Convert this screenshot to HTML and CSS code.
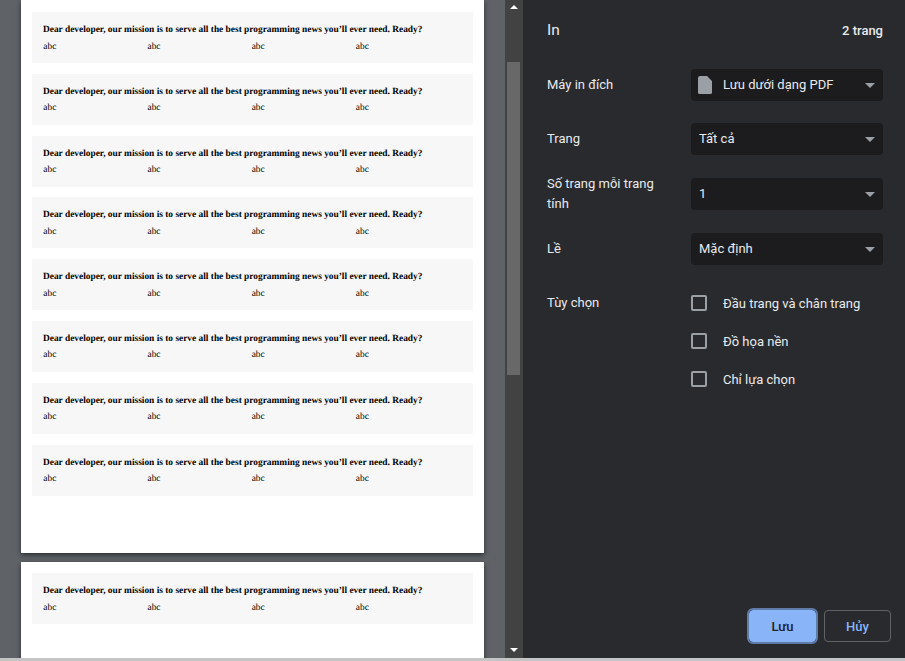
FILE: index.html
```html
<!DOCTYPE html>
<html lang="vi">
<head>
<meta charset="utf-8">
<title>In</title>
<link rel="stylesheet" href="styles.css">
</head>
<body>
<div class="app">
  <main class="preview">
    <section class="page page-first">
      <div class="card"><p class="headline">Dear developer, our mission is to serve all the best programming news you’ll ever need. Ready?</p><div class="cols"><span>abc</span><span>abc</span><span>abc</span><span>abc</span></div></div>
      <div class="card"><p class="headline">Dear developer, our mission is to serve all the best programming news you’ll ever need. Ready?</p><div class="cols"><span>abc</span><span>abc</span><span>abc</span><span>abc</span></div></div>
      <div class="card"><p class="headline">Dear developer, our mission is to serve all the best programming news you’ll ever need. Ready?</p><div class="cols"><span>abc</span><span>abc</span><span>abc</span><span>abc</span></div></div>
      <div class="card"><p class="headline">Dear developer, our mission is to serve all the best programming news you’ll ever need. Ready?</p><div class="cols"><span>abc</span><span>abc</span><span>abc</span><span>abc</span></div></div>
      <div class="card"><p class="headline">Dear developer, our mission is to serve all the best programming news you’ll ever need. Ready?</p><div class="cols"><span>abc</span><span>abc</span><span>abc</span><span>abc</span></div></div>
      <div class="card"><p class="headline">Dear developer, our mission is to serve all the best programming news you’ll ever need. Ready?</p><div class="cols"><span>abc</span><span>abc</span><span>abc</span><span>abc</span></div></div>
      <div class="card"><p class="headline">Dear developer, our mission is to serve all the best programming news you’ll ever need. Ready?</p><div class="cols"><span>abc</span><span>abc</span><span>abc</span><span>abc</span></div></div>
      <div class="card"><p class="headline">Dear developer, our mission is to serve all the best programming news you’ll ever need. Ready?</p><div class="cols"><span>abc</span><span>abc</span><span>abc</span><span>abc</span></div></div>
    </section>
    <section class="page page-second">
      <div class="card"><p class="headline">Dear developer, our mission is to serve all the best programming news you’ll ever need. Ready?</p><div class="cols"><span>abc</span><span>abc</span><span>abc</span><span>abc</span></div></div>
    </section>
  </main>
  <div class="scrollbar">
    <svg class="arrow" width="8" height="4" viewBox="0 0 8 4"><path d="M0 4L4 0L8 4Z" fill="#fff"/></svg>
    <div class="track"><div class="thumb"></div></div>
    <svg class="arrow" width="8" height="4" viewBox="0 0 8 4"><path d="M0 0L4 4L8 0Z" fill="#fff"/></svg>
  </div>
  <aside class="panel">
    <header class="panel-head"><h1 class="title">In</h1><span class="count">2 trang</span></header>
    <div class="settings">
      <div class="row row-dest"><span class="label">Máy in đích</span>
        <div class="select"><svg class="file" width="14" height="18" viewBox="0 0 14 18"><path d="M2 0H9L14 5V16.500A1.500 1.500 0 0 1 12.500 18H1.500A1.500 1.500 0 0 1 0 16.500V2A2 2 0 0 1 2 0Z" fill="#9aa0a6"/></svg><span class="value value-icon">Lưu dưới dạng PDF</span><i class="caret"></i></div></div>
      <div class="row row-pages"><span class="label">Trang</span>
        <div class="select"><span class="value">Tất cả</span><i class="caret"></i></div></div>
      <div class="row row-sheet"><span class="label label-wrap">Số trang mỗi trang tính</span>
        <div class="select"><span class="value">1</span><i class="caret"></i></div></div>
      <div class="row row-margin"><span class="label">Lề</span>
        <div class="select"><span class="value">Mặc định</span><i class="caret"></i></div></div>
      <div class="row row-options"><span class="label label-opt">Tùy chọn</span>
        <div class="checks">
          <label class="check"><i class="box"></i><span>Đầu trang và chân trang</span></label>
          <label class="check"><i class="box"></i><span>Đồ họa nền</span></label>
          <label class="check"><i class="box"></i><span>Chỉ lựa chọn</span></label>
        </div></div>
    </div>
    <footer class="actions"><button class="btn btn-primary">Lưu</button><button class="btn btn-cancel">Hủy</button></footer>
  </aside>
</div>
<div class="edge"></div>
</body>
</html>
```

FILE: styles.css
```css
* { box-sizing: border-box; }
html, body { margin: 0; height: 100%; overflow: hidden; }
body { width: 905px; height: 661px; background: #202124; display: flex; flex-direction: column; font-family: Roboto, "Noto Sans", sans-serif; }
.app { display: flex; height: 658px; }
.edge { height: 3px; background: #c4c4c4; }

.preview { width: 505px; height: 658px; overflow: hidden; background: #5f6368; padding-left: 21px; flex: none; }
.page { width: 463px; background: #fff; padding: 0 11px; box-shadow: 0 2px 5px rgba(0, 0, 0, .55); }
.page-first { height: 553px; padding-top: 12px; }
.page-second { height: 120px; margin-top: 9px; padding-top: 11px; }
.card { height: 51px; margin-bottom: 10.800px; background: #f7f7f7; padding: 12px 11px 0; font-family: "Liberation Serif", "Times New Roman", serif; color: #000; text-rendering: geometricPrecision; }
.headline { margin: 0; font-size: 9.380px; line-height: 12px; font-weight: 700; white-space: nowrap; }
.cols { display: grid; grid-template-columns: repeat(4, 104.200px); margin-top: 4.500px; padding-left: .3px; font-size: 9.380px; line-height: 12px; }

.scrollbar { width: 18px; flex: none; background: #424242; display: flex; flex-direction: column; align-items: center; padding: 5px 0 6px; }
.arrow { flex: none; }
.track { flex: 1; width: 100%; padding: 53px 1px 0 2px; }
.thumb { width: 13px; height: 313px; background: #686868; }

.panel { width: 382px; flex: none; height: 658px; background: #292a2d; color: #e8eaed; padding: 0 22px 0 24px; display: flex; flex-direction: column; font-size: 13px; }
.panel-head { display: flex; justify-content: space-between; align-items: center; height: 60px; }
.title { margin: 0; font-size: 15.500px; font-weight: 400; }
.count { font-size: 13px; font-weight: 500; }
.settings { flex: 1; padding-top: 9px; }
.row { display: flex; align-items: center; justify-content: space-between; }
.row-pages { margin-top: 22px; }
.row-sheet { margin-top: 19px; }
.row-margin { margin-top: 19px; }
.row-options { margin-top: 18px; align-items: flex-start; }
.label { width: 120px; line-height: 20px; }
.label-opt { margin-top: 10px; }
.select { width: 192px; height: 32px; background: #1c1c1e; border-radius: 4px; display: flex; align-items: center; padding: 0 8px; position: relative; }
.file { flex: none; margin: 0 11px 0 -1px; }
.value { flex: 1; padding-bottom: 1px; }
.caret { width: 0; height: 0; border-left: 5px solid transparent; border-right: 5px solid transparent; border-top: 5px solid #9aa0a6; }
.checks { width: 192px; display: flex; flex-direction: column; gap: 22px; padding-top: 12px; }
.check { display: flex; align-items: center; height: 16px; }
.box { width: 16px; height: 16px; border: 2px solid #9aa0a6; border-radius: 2px; margin-right: 16px; flex: none; }
.actions { display: flex; justify-content: flex-end; gap: 8px; padding-bottom: 16px; margin-right: -8px; }
.btn { height: 32px; font-family: inherit; font-size: 13px; font-weight: 500; border-radius: 4px; padding: 0; }
.btn-primary { width: 67px; background: #8ab4f8; color: #202124; border: 1px solid #8ab4f8; outline: 2px solid #5f7ba8; }
.btn-cancel { width: 67px; background: transparent; color: #8ab4f8; border: 1px solid #5f6368; }
```
